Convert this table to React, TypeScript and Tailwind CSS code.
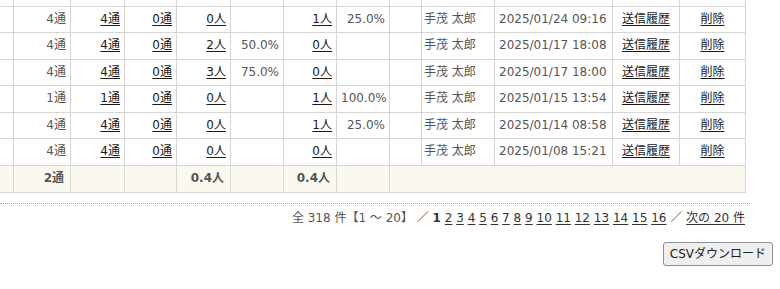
import React from 'react';

type Row = {
  sent: string;
  opened: string;
  failed: string;
  clicks: string;
  clickRate: string;
  cv: string;
  cvRate: string;
  owner: string;
  date: string;
};

const rows: Row[] = [
  { sent: '4通', opened: '4通', failed: '0通', clicks: '0人', clickRate: '', cv: '1人', cvRate: '25.0%', owner: '手茂 太郎', date: '2025/01/24 09:16' },
  { sent: '4通', opened: '4通', failed: '0通', clicks: '2人', clickRate: '50.0%', cv: '0人', cvRate: '', owner: '手茂 太郎', date: '2025/01/17 18:08' },
  { sent: '4通', opened: '4通', failed: '0通', clicks: '3人', clickRate: '75.0%', cv: '0人', cvRate: '', owner: '手茂 太郎', date: '2025/01/17 18:00' },
  { sent: '1通', opened: '1通', failed: '0通', clicks: '0人', clickRate: '', cv: '1人', cvRate: '100.0%', owner: '手茂 太郎', date: '2025/01/15 13:54' },
  { sent: '4通', opened: '4通', failed: '0通', clicks: '0人', clickRate: '', cv: '1人', cvRate: '25.0%', owner: '手茂 太郎', date: '2025/01/14 08:58' },
  { sent: '4通', opened: '4通', failed: '0通', clicks: '0人', clickRate: '', cv: '0人', cvRate: '', owner: '手茂 太郎', date: '2025/01/08 15:21' },
];

const colWidths = [14, 57, 54, 52, 54, 53, 53, 53, 32, 73, 118, 67, 66];

const td = 'border border-[#d6d6d6] px-[4px] py-[3px] leading-[19.6px] whitespace-nowrap';
const link = 'text-[#1a1a1a] underline underline-offset-2';
const tot = 'border border-[#d6d6d6] pl-[4px] pr-[6px] py-[3px] leading-[19.6px] text-right font-bold whitespace-nowrap';

const pages = ['2', '3', '4', '5', '6', '7', '8', '9', '10', '11', '12', '13', '14', '15', '16'];

export default function App() {
  return (
    <div
      className="w-[780px] h-[289px] overflow-hidden bg-white text-[12px] text-[#555]"
      style={{ fontFamily: '"DejaVu Sans", "Noto Sans CJK JP", sans-serif' }}
    >
      <table className="-ml-px border-collapse table-fixed w-[747px]">
        <colgroup>
          {colWidths.map((w, i) => (
            <col key={i} style={{ width: w }} />
          ))}
        </colgroup>
        <tbody>
          <tr className="h-[6px]">
            {colWidths.map((_, i) => (
              <td key={i} className="border-x border-b border-[#d6d6d6] p-0 h-[6px]" />
            ))}
          </tr>
          {rows.map((r, i) => (
            <tr key={i}>
              <td className={td} />
              <td className={`${td} text-right`}>{r.sent}</td>
              <td className={`${td} text-right`}><a className={link}>{r.opened}</a></td>
              <td className={`${td} text-right`}><a className={link}>{r.failed}</a></td>
              <td className={`${td} text-right`}><a className={link}>{r.clicks}</a></td>
              <td className={`${td} text-right`}>{r.clickRate}</td>
              <td className={`${td} text-right`}><a className={link}>{r.cv}</a></td>
              <td className={`${td} text-right`}>{r.cvRate}</td>
              <td className={td} />
              <td className={`${td} pl-[2px]`}>{r.owner}</td>
              <td className={td}>{r.date}</td>
              <td className={`${td} text-center`}><a className={link}>送信履歴</a></td>
              <td className={`${td} text-center`}><a className={link}>削除</a></td>
            </tr>
          ))}
          <tr className="bg-[#fbf8f0]">
            <td className={tot} />
            <td className={tot}>2通</td>
            <td className={tot} />
            <td className={tot} />
            <td className={tot}>0.4人</td>
            <td className={tot} />
            <td className={tot}>0.4人</td>
            <td className={tot} />
            <td className={tot} colSpan={5} />
          </tr>
        </tbody>
      </table>

      <div className="mt-[10px] w-[750px] border-t border-dotted border-[#a0a0a0] pt-[4px] pr-[5px] text-right leading-[20px]">
        <span>全 318 件【1 ～ 20】 ／ </span>
        <span className="font-bold text-[#333]">1</span>
        {pages.map((p) => (
          <React.Fragment key={p}>
            {' '}
            <a className="text-[#333] underline underline-offset-2">{p}</a>
          </React.Fragment>
        ))}
        <span> ／ </span>
        <a className="text-[#333] underline underline-offset-2">次の 20 件</a>
      </div>

      <div className="mt-[14px] flex justify-end pr-[7px]">
        <button className="h-[24px] px-[6px] rounded-[3px] border border-[#8f8f8f] bg-[#efefef] text-[12px] text-[#222] leading-none">
          CSVダウンロード
        </button>
      </div>
    </div>
  );
}
